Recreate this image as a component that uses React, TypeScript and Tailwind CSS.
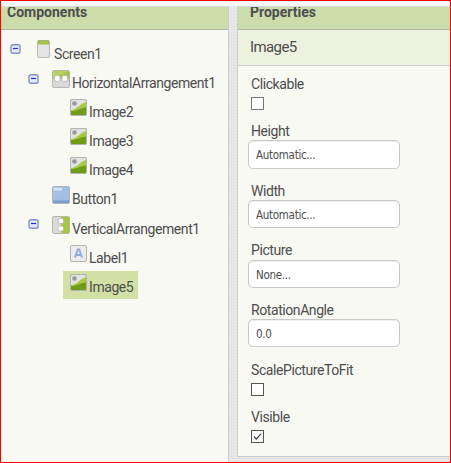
import type { ReactNode } from 'react';

type Kind = 'screen' | 'horizontal' | 'vertical' | 'image' | 'button' | 'label';

function Icon({ kind }: { kind: Kind }) {
  if (kind === 'screen') {
    return (
      <svg width="13" height="18" viewBox="0 0 13 18" className="shrink-0">
        <rect x="0.5" y="0.5" width="12" height="17" rx="1.5" fill="#e4e4e4" stroke="#b9b9b9" />
        <path d="M1 1h11v3.5H1z" fill="#a5c53d" />
        <path d="M1 .7h11" stroke="#a3af83" />
      </svg>
    );
  }
  if (kind === 'horizontal') {
    return (
      <svg width="18" height="18" viewBox="0 0 18 18" className="shrink-0">
        <rect x="0.5" y="0.5" width="17" height="17" rx="1.5" fill="#d9d9d9" stroke="#b5b5b5" />
        <path d="M1 1h16v8H1z" fill="#a6c63f" />
        <path d="M1 1h16L1 8z" fill="#b8d262" />
        <rect x="2.6" y="5.6" width="5.4" height="5.8" rx="1.5" fill="#fff" stroke="#bbb" />
        <rect x="10" y="5.6" width="5.4" height="5.8" rx="1.5" fill="#fff" stroke="#bbb" />
        <path d="M8 8.500h2" stroke="#bbb" />
      </svg>
    );
  }
  if (kind === 'vertical') {
    return (
      <svg width="18" height="18" viewBox="0 0 18 18" className="shrink-0">
        <rect x="0.5" y="0.5" width="17" height="17" rx="1.5" fill="#dadada" stroke="#b5b5b5" />
        <path d="M9 1h8v16H9z" fill="#a6c63c" />
        <rect x="6" y="2.600" width="5.500" height="5" rx="1.500" fill="#fff" stroke="#bbb" />
        <rect x="6" y="10" width="5.500" height="5" rx="1.500" fill="#fff" stroke="#bbb" />
      </svg>
    );
  }
  if (kind === 'button') {
    return (
      <svg width="18" height="18" viewBox="0 0 18 18" className="shrink-0">
        <defs>
          <linearGradient id="blue" x1="0" y1="0" x2="1" y2="1">
            <stop stopColor="#b1c9e7" />
            <stop offset="1" stopColor="#8eafd9" />
          </linearGradient>
        </defs>
        <rect x="0.5" y="0.5" width="17" height="17" rx="1.5" fill="url(#blue)" stroke="#aeb5bd" />
        <path d="M1 14.500h16V17H1z" fill="#799fce" />
        <path d="M2 14C3 8 8 5 17 4v10z" fill="#a9c2e2" opacity=".6" />
        <path d="M2 2h8v2.500H2z" fill="#dce8f5" />
      </svg>
    );
  }
  if (kind === 'label') {
    return (
      <svg width="17" height="17" viewBox="0 0 17 17" className="shrink-0">
        <rect x="0.5" y="0.5" width="16" height="16" rx="1.5" fill="#ececec" stroke="#b3b3b3" />
        <path d="M5 12.500 7.800 4.500h1.400L12 12.500M6.200 10h4.600" fill="none" stroke="#8eaedb" strokeWidth="2" />
      </svg>
    );
  }
  return (
    <svg width="17" height="17" viewBox="0 0 17 17" className="shrink-0">
      <rect x="0.5" y="0.5" width="16" height="16" rx="1.5" fill="#e3e3e3" stroke="#b3b3b3" />
      <path d="M1 11C7 11 9 5 16 3v13H1z" fill="#a9c943" />
      <path d="M1 12C6 12.500 10 9 16 8.500V16H1z" fill="#6f9b16" />
      <circle cx="4.500" cy="4.500" r="2.300" fill="#989898" />
      <rect x="0.5" y="0.5" width="16" height="16" rx="1.5" fill="none" stroke="#b3b3b3" />
    </svg>
  );
}

function Collapse() {
  return (
    <svg width="11" height="10" viewBox="0 0 11 10" className="shrink-0">
      <rect x="1" y="0.700" width="9" height="8.600" rx="1.800" fill="#e4e8f6" stroke="#8492ca" strokeWidth="1.400" />
      <path d="M3 4.500h5" stroke="#2a2ad0" strokeWidth="1.200" />
    </svg>
  );
}

const nodes: { name: string; kind: Kind; height: string; indent: string; toggle?: string; selected?: boolean }[] = [
  { name: 'Screen1', kind: 'screen', height: 'h-[30px]', indent: 'pl-[9px]', toggle: 'mr-[16px] pt-[4px]' },
  { name: 'HorizontalArrangement1', kind: 'horizontal', height: 'h-[29px]', indent: 'pl-[27px]', toggle: 'mr-[13px] pt-[4px]' },
  { name: 'Image2', kind: 'image', height: 'h-[29px]', indent: 'pl-[62px]' },
  { name: 'Image3', kind: 'image', height: 'h-[29px]', indent: 'pl-[62px]' },
  { name: 'Image4', kind: 'image', height: 'h-[29px]', indent: 'pl-[62px]' },
  { name: 'Button1', kind: 'button', height: 'h-[30px]', indent: 'pl-[44px]' },
  { name: 'VerticalArrangement1', kind: 'vertical', height: 'h-[29px]', indent: 'pl-[27px]', toggle: 'mr-[13px] pt-[3px]' },
  { name: 'Label1', kind: 'label', height: 'h-[29px]', indent: 'pl-[62px]' },
  { name: 'Image5', kind: 'image', height: 'h-[28px]', indent: 'pl-[62px]', selected: true },
];

function Tree() {
  return (
    <div className="pt-[7px]">
      {nodes.map((n) => {
        const leaf = n.kind === 'image' || n.kind === 'label';
        return (
          <div key={n.name} className={`flex ${n.height} ${n.indent}`}>
            {n.toggle && <div className={`${n.toggle} mt-[3px]`}><Collapse /></div>}
            <div className={`flex pt-[3px] ${n.selected ? 'bg-[#d2e0a6]' : ''} ${leaf ? 'w-[75px] pl-[7px]' : n.kind === 'button' ? 'pl-[7px]' : ''}`}>
              <Icon kind={n.kind} />
              <span className={`text-[14px] leading-[16px] tracking-[-0.43px] whitespace-nowrap ${n.kind === 'screen' ? 'ml-[4px] pt-[6px]' : 'ml-[2px] pt-[5px]'}`}>{n.name}</span>
            </div>
          </div>
        );
      })}
    </div>
  );
}

function Property({ label, height, children }: { label: string; height: string; children: ReactNode }) {
  return (
    <div className={height}>
      <div className="pl-[3px] text-[14px] leading-[16px] tracking-[-0.42px]">{label}</div>
      {children}
    </div>
  );
}

function Field({ value, box }: { value: string; box: string }) {
  return (
    <div className={`w-[152px] rounded-[5px] border border-[#c8c8c8] bg-white pl-[7px] font-['DejaVu_Sans_Condensed','DejaVu_Sans',sans-serif] text-[11.5px] leading-[28px] tracking-[-0.3px] shadow-[inset_0_1px_1px_#eee] ${box}`}>
      {value}
    </div>
  );
}

function Check({ checked = false, tone = 'border-[#555]' }: { checked?: boolean; tone?: string }) {
  return (
    <div className={`mt-[5px] ml-[3px] h-[13px] w-[13px] border bg-white ${tone}`}>
      {checked && (
        <svg width="11" height="11" viewBox="0 0 11 11">
          <path d="M2 5.500 4.300 8 9.200 2.700" fill="none" stroke="#444" strokeWidth="1.200" />
        </svg>
      )}
    </div>
  );
}

function Header({ title, pad }: { title: string; pad: string }) {
  return (
    <div className={`h-[24px] overflow-hidden border-t border-b border-t-[#d9dddb] border-b-[#b2b8a6] bg-[#cddcab] ${pad}`}>
      <div className="-mt-[3px] text-[14px] leading-[16px] font-bold">{title}</div>
    </div>
  );
}

export default function App() {
  return (
    <div className="flex h-[463px] w-[451px] flex-col overflow-hidden border border-[#ff0000] bg-[#f7f7f7] pt-[5px] font-['Roboto',sans-serif] text-[#4d4d4d]">
      <div className="flex min-h-0 flex-1 bg-[#e6e6e6] bg-[repeating-linear-gradient(0deg,#dcdcdc55_0px,#dcdcdc55_1px,transparent_1px,transparent_3px),repeating-linear-gradient(90deg,#e9e9e9_0px,#e9e9e9_1px,transparent_1px,transparent_3px)]">
        <section className="w-[228px] shrink-0 border-r border-[#cecece] bg-[#f8f9f3]">
          <Header title="Components" pad="pl-[6px]" />
          <Tree />
        </section>
        <section className="ml-[8px] h-[451px] w-[213px] shrink-0 border-b border-l border-[#cecece] bg-[#f8f9f3]">
          <Header title="Properties" pad="pl-[12px]" />
          <div className="h-[36px] border-b border-[#cecece] bg-[#edf1df] pt-[9px] pl-[12px] text-[15px] leading-[17px] tracking-[-0.6px]">Image5</div>
          <div className="pt-[10px] pl-[10px]">
            <Property label="Clickable" height="h-[47px]"><Check tone="border-[#777]" /></Property>
            <Property label="Height" height="h-[60px]"><Field value="Automatic..." box="mt-px h-[29px]" /></Property>
            <Property label="Width" height="h-[59px]"><Field value="Automatic..." box="mt-px h-[28px]" /></Property>
            <Property label="Picture" height="h-[60px]"><Field value="None..." box="mt-[2px] h-[28px]" /></Property>
            <Property label="RotationAngle" height="h-[60px]"><Field value="0.0" box="mt-px h-[28px]" /></Property>
            <Property label="ScalePictureToFit" height="h-[47px]"><Check /></Property>
            <Property label="Visible" height="h-[34px]"><Check checked /></Property>
          </div>
        </section>
      </div>
    </div>
  );
}
